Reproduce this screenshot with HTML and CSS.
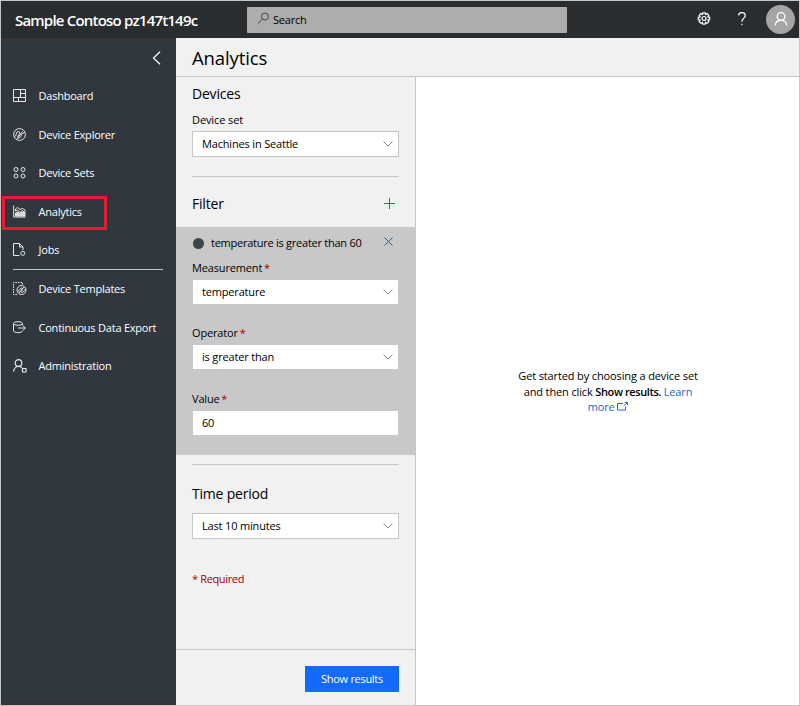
FILE: index.html
```
<!DOCTYPE html>
<html lang="en">
<head>
<meta charset="utf-8">
<title>Analytics</title>
<link rel="stylesheet" href="styles.css">
</head>
<body>
<div class="app">
  <header class="topbar">
    <div class="brand"><span>Sample Contoso pz147t149c</span></div>
    <div class="search">
      <svg width="13" height="13" viewBox="0 0 13 13"><circle cx="8" cy="4.5" r="3.5"/><path d="M5.5 7 .7 11.8"/></svg>
      <span>Search</span>
    </div>
    <div class="actions">
      <svg class="gear" width="14" height="14" viewBox="0 0 14 14"><path d="M5.8.8h2.4l.4 1.7 1.5-.9 1.7 1.7-.9 1.5 1.7.5v2.4l-1.7.4.9 1.5-1.7 1.7-1.5-.9-.4 1.8H5.8l-.4-1.8-1.5.9-1.7-1.7.9-1.5L1.3 7.7V5.3L3.1 4.8l-.9-1.5 1.7-1.7 1.5.9z"/><circle cx="7" cy="6.5" r="2"/></svg>
      <svg class="help" width="10" height="14" viewBox="0 0 10 14"><path d="M1.6 3.4C1.8 1.5 3.1.7 4.8.7c2 0 3.4 1.1 3.4 2.8 0 2.9-3.3 3-3.3 6.2M4.9 11.7v1.5"/></svg>
      <div class="avatar"><svg width="14" height="14" viewBox="0 0 14 14"><circle cx="7" cy="4.5" r="3.8"/><path d="M1.3 13.5c0-3.4 2.2-5.2 5.7-5.2s5.7 1.8 5.7 5.2"/></svg></div>
    </div>
  </header>
  <div class="body">
    <nav class="sidebar">
      <div class="collapse"><svg width="9" height="14" viewBox="0 0 9 14"><path d="M8 .7 1.5 7 8 13.3"/></svg></div>
      <a class="item"><svg width="14" height="14" viewBox="0 0 14 14"><path d="M.5.5h12v12H.5zM7.5.5v8M.5 8.5h12M7.5 4.5h5M5.5 8.5v4"/></svg><span>Dashboard</span></a>
      <a class="item"><svg width="14" height="14" viewBox="0 0 14 14"><circle cx="6.5" cy="6.5" r="5.9"/><path d="M1.500 8.500c2 0 1.500-3.500 2.500-4.500s3-.5 2.800 1-2.300 2.500-2 4 2.200 1.200 3-.5 1-3.500 3.700-4M4 11l5.500-7.500"/></svg><span>Device Explorer</span></a>
      <a class="item"><svg width="14" height="14" viewBox="0 0 14 14"><circle cx="3" cy="3.5" r="2"/><circle cx="10" cy="3.5" r="2"/><circle cx="3" cy="10" r="2"/><circle cx="10" cy="10" r="2"/></svg><span>Device Sets</span></a>
      <a class="item current"><svg width="14" height="14" viewBox="0 0 14 14"><path d="M.7.5V12h12"/><path class="area" d="M2.500 11V8l2.500-1 2 1.500L9.500 7l2.500 1v3z"/><path d="M2.500 6V4l2-1.500L7 4.500l2.500-1L12 5v3L9.500 5.500 7 7.500 4.500 5z"/></svg><span>Analytics</span></a>
      <a class="item last"><svg width="14" height="14" viewBox="0 0 14 14"><path d="M6.500 12.500h-6V.5h6L10 4v3M6.500.5V4H10"/><circle cx="9.800" cy="10.300" r="2"/></svg><span>Jobs</span></a>
      <a class="item"><svg width="14" height="14" viewBox="0 0 14 14"><path class="dash" d="M4 12.500H.5V.5h9v2"/><circle cx="8.500" cy="8" r="4.500"/><path d="M5 9c2 0 1.500-3 3.500-3s0 2.500 0 4 2.500-.5 4-3M6 11l5-6"/></svg><span>Device Templates</span></a>
      <a class="item"><svg width="14" height="14" viewBox="0 0 14 14"><ellipse cx="5" cy="2.500" rx="4.500" ry="1.800"/><path d="M.5 2.500v7.300c0 1 2 1.800 4.500 1.800s4.500-.8 4.500-1.800M9.500 2.500v1.800M5 7h7.300M9.800 4.500 12.300 7 9.800 9.500"/></svg><span>Continuous Data Export</span></a>
      <a class="item"><svg class="admin" width="14" height="14" viewBox="0 0 14 14"><circle cx="5.500" cy="4" r="3.300"/><path d="M.6 12.500C1 9.500 2.500 7.500 5.500 7.500c1.500 0 2.500.4 3.500 1.300M9.500 9.500h3.500V13H9.500z"/></svg><span>Administration</span></a>
    </nav>
    <main class="main">
      <h1><span>Analytics</span></h1>
      <div class="content">
        <section class="panel">
          <div class="group devices">
            <h2><span>Devices</span></h2>
            <label><span>Device set</span></label>
            <div class="select"><span>Machines in Seattle</span><svg width="10" height="6" viewBox="0 0 10 6"><path d="M.5.5 5 5 9.5.5"/></svg></div>
          </div>
          <div class="group filter-head">
            <h2><span>Filter</span></h2>
            <svg width="11" height="11" viewBox="0 0 11 11"><path d="M5.5 0v11M0 5.500h11"/></svg>
          </div>
          <div class="filter">
            <div class="rule"><i class="dot"></i><span>temperature is greater than 60</span><svg width="9" height="9" viewBox="0 0 9 9"><path d="M.5.5l8 8M8.500.5l-8 8"/></svg></div>
            <div class="field"><label><span>Measurement</span> <b>*</b></label>
            <div class="select"><span>temperature</span><svg width="10" height="6" viewBox="0 0 10 6"><path d="M.5.5 5 5 9.5.5"/></svg></div></div>
            <div class="field"><label><span>Operator</span> <b>*</b></label>
            <div class="select"><span>is greater than</span><svg width="10" height="6" viewBox="0 0 10 6"><path d="M.5.5 5 5 9.5.5"/></svg></div></div>
            <div class="field"><label><span>Value</span> <b>*</b></label>
            <div class="select"><span>60</span></div></div>
          </div>
          <div class="group period">
            <h2><span>Time period</span></h2>
            <div class="select"><span>Last 10 minutes</span><svg width="10" height="6" viewBox="0 0 10 6"><path d="M.5.5 5 5 9.5.5"/></svg></div>
            <p class="required"><span>* Required</span></p>
          </div>
          <footer><button>Show results</button></footer>
        </section>
        <section class="results">
          <p><span>Get started by choosing a device set</span><br><span>and then click <strong>Show results.</strong> <a>Learn</a></span><br><a>more</a> <svg width="11" height="9" viewBox="0 0 11 9"><path d="M6 1.500H.5V8h8V4.500M7 3.800 10 .8M7.800.5h2.700v2.700"/></svg></p>
        </section>
      </div>
    </main>
  </div>
</div>
</body>
</html>
```
FILE: styles.css
```
*, *::after { box-sizing: border-box; }
body { margin: 0; font: 11px/16px "Open Sans", "Noto Sans", sans-serif; letter-spacing: -.22px; color: #000; }
svg { display: block; flex: none; fill: none; stroke: currentColor; stroke-width: 1; }
h1, h2, p { margin: 0; font-weight: 400; }

.app { display: flex; flex-direction: column; width: 800px; height: 706px; border: 1px solid #c6c6c6; background: #fff; }

.topbar { display: flex; align-items: center; height: 37px; background: #292d30; color: #fff; }
.brand { width: 246px; padding-left: 14px; font-size: 15px; font-weight: 600; letter-spacing: -.8px; white-space: nowrap; }
.search { display: flex; align-items: center; gap: 3px; width: 320px; height: 26px; padding: 1px 0 0 10px; border-radius: 1px; background: #adadad; color: #000; }
.search svg { color: #444; margin-top: -3px; }
.actions { display: flex; align-items: center; flex: 1; justify-content: flex-end; padding-right: 4px; }
.gear { margin-right: 26px; margin-top: -1px; stroke-width: 1.2; }
.help { margin-right: 19px; margin-top: -1px; stroke-width: 1.2; }
.avatar { display: flex; align-items: center; justify-content: center; width: 29px; height: 29px; border-radius: 50%; background: #a5a5a5; }
.avatar svg { margin-top: -2px; stroke-width: 1.3; }

.body { display: flex; flex: 1; min-height: 0; }
.sidebar { width: 175px; background: #30373f; color: #fff; }
.collapse { display: flex; justify-content: flex-end; height: 38.7px; padding: 13px 15px 0 0; }
.collapse svg { stroke-width: 1.2; }
.item { position: relative; display: flex; align-items: center; gap: 11.5px; height: 38.6px; padding-left: 12px; white-space: nowrap; }
.item svg { width: 14px; color: #e8e8e8; }
.item .admin { stroke-width: 1.2; }
.area { fill: #d8d8d8; }
.dash { stroke-dasharray: 1.5 1; }
.last::after { content: ""; position: absolute; left: 12px; right: 13px; bottom: 0; height: 1px; background: #c6c6c6; }
.current::after { content: ""; position: absolute; left: 1px; top: 4px; width: 105px; height: 34px; border: 3px solid #e81a35; }

.main { display: flex; flex-direction: column; flex: 1; min-width: 0; }
h1 { height: 39px; padding: 4px 16px 0; border-bottom: 1px solid #c6c6c6; background: #f1f1f1; font-size: 18.5px; line-height: 32px; letter-spacing: -.1px; }
.content { display: flex; flex: 1; min-height: 0; }
.panel { display: flex; flex-direction: column; width: 240px; border-right: 1px solid #c6c6c6; background: #f1f1f1; }
h2 { font-size: 14px; line-height: 20px; letter-spacing: -.2px; }
label { display: block; height: 16px; letter-spacing: -.15px; }
label b { margin-left: -1px; font-weight: 400; color: #a80000; }
.group { margin: 0 16px; }
.devices { height: 100px; padding-top: 7px; border-bottom: 1px solid #c6c6c6; }
.devices label { margin: 8px 0 3px; letter-spacing: -.1px; }
.select { display: flex; align-items: center; justify-content: space-between; height: 26px; padding: 0 5px 0 9px; border: 1px solid #c6c6c6; background: #fff; letter-spacing: -.17px; }
.select svg { color: #888; }
.filter-head { display: flex; align-items: center; justify-content: space-between; height: 50px; padding: 4px 4.5px 0 0; }
.filter-head svg { margin-top: -1px; color: #a14436; }
.filter { height: 228px; padding: 8px 16px 0; background: #c8c8c8; }
.filter .select { border-color: #c8c8c8; }
.rule { display: flex; align-items: center; height: 16px; letter-spacing: -.25px; white-space: nowrap; }
.rule svg { margin-left: auto; margin-right: 6px; color: #2e5f87; margin-top: -3px; }
.dot { width: 11px; height: 11px; margin: 0 7px 0 1px; border-radius: 50%; background: #37474a; }
.field { height: 66px; padding-top: 9px; }
.field:nth-child(2) { height: 65px; }
.field .select { margin-top: 3px; }
.period { height: 185px; margin-top: 9px; border-top: 1px solid #c6c6c6; padding-top: 19px; }
.period .select { margin-top: 9px; }
.required { margin-top: 32px; letter-spacing: -.35px; color: #a80000; }
footer { display: flex; flex: 1; align-items: flex-start; justify-content: flex-end; padding: 16px 16px 0; border-top: 1px solid #c6c6c6; }
button { width: 94px; height: 26px; padding: 0; border: 0; background: #136bfb; color: #fff; font: inherit; letter-spacing: -.3px; }
.results { flex: 1; padding: 291px 0 0 1px; text-align: center; line-height: 15.5px; letter-spacing: -.13px; white-space: nowrap; }
.results strong { font-weight: 600; letter-spacing: -.4px; }
.results a { color: #2464d2; }
.results svg { display: inline-block; color: #2464d2; }
```
